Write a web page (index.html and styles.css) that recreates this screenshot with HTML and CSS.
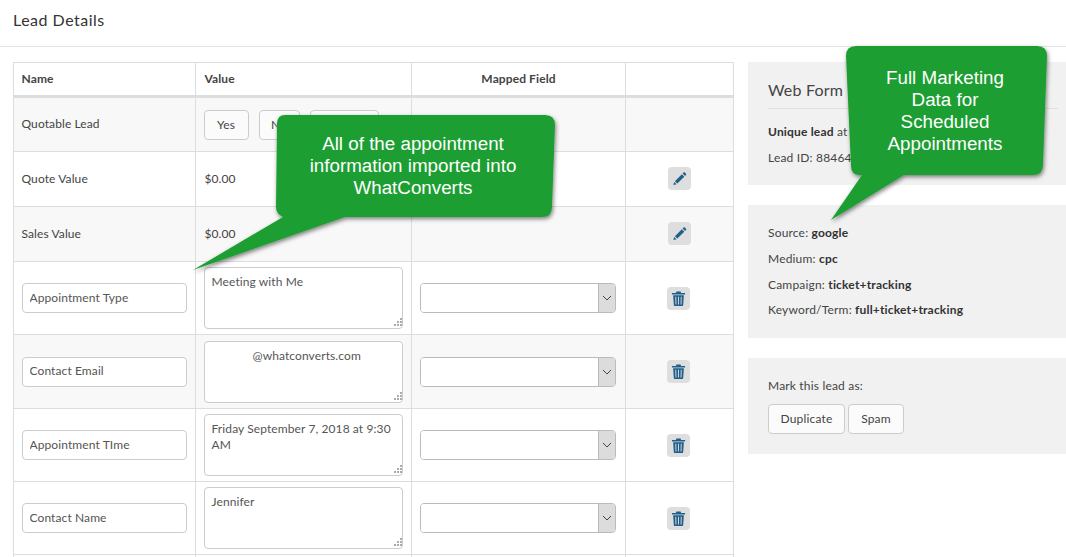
FILE: index.html
```html
<!DOCTYPE html>
<html lang="en">
<head>
<meta charset="utf-8">
<title>Lead Details</title>
<link rel="stylesheet" href="styles.css">
</head>
<body>
<svg class="defs" width="0" height="0" aria-hidden="true">
  <defs>
    <symbol id="pencil" viewBox="0 0 16 16"><path d="M1.5 15l.8-3.4 2.6 2.6zM3.1 10.8l7.4-7.4 2.6 2.6-7.4 7.4zM11.3 2.6l1-1c.4-.4 1-.4 1.4 0l1.2 1.2c.4.4.4 1 0 1.4l-1 1z" fill="#1f5f8b"/></symbol>
    <symbol id="trash" viewBox="0 0 16 16"><path d="M5.8 0.5h4.4l.6 1.5H15v1.6H1V2h4.200zM2.300 4.400h11.400L13 15a1 1 0 0 1-1 1H4a1 1 0 0 1-1-1zM4.600 6l.2 8.500h1L5.600 6zM7.500 6v8.500h1V6zM10.400 6l-.2 8.500h1l.2-8.500z" fill="#1f5f8b" fill-rule="evenodd"/></symbol>
    <symbol id="chev" viewBox="0 0 10 6"><path d="M1 1l4 4 4-4" fill="none" stroke="#444" stroke-width="1"/></symbol>
    <symbol id="grip" viewBox="0 0 9 9"><path d="M7 0h2v2H7zM4 3h2v2H4zM7 3h2v2H7zM1 6h2v2H1zM4 6h2v2H4zM7 6h2v2H7z" fill="#aaa"/></symbol>
  </defs>
</svg>
<header class="page-head"><h1>Lead Details</h1></header>
<main class="content">
  <table class="fields">
    <colgroup><col class="c-name"><col class="c-value"><col class="c-map"><col class="c-act"></colgroup>
    <thead>
      <tr><th>Name</th><th>Value</th><th class="center">Mapped Field</th><th></th></tr>
    </thead>
    <tbody>
      <tr class="short alt">
        <td>Quotable Lead</td>
        <td><div class="btn-row"><button class="btn b-yes">Yes</button><button class="btn b-no">No</button><button class="btn b-un">Unknown</button></div></td>
        <td></td><td></td>
      </tr>
      <tr class="short">
        <td>Quote Value</td><td class="val">$0.00</td><td></td>
        <td class="center"><span class="icon-btn"><svg><use href="#pencil"/></svg></span></td>
      </tr>
      <tr class="short alt">
        <td>Sales Value</td><td class="val">$0.00</td><td></td>
        <td class="center"><span class="icon-btn"><svg><use href="#pencil"/></svg></span></td>
      </tr>
      <tr>
        <td><input class="text-in" value="Appointment Type"></td>
        <td><div class="ta-wrap"><textarea class="ta">Meeting with Me</textarea><svg class="grip"><use href="#grip"/></svg></div></td>
        <td><div class="sel"><select></select><span class="sel-arrow"><svg><use href="#chev"/></svg></span></div></td>
        <td class="center"><span class="icon-btn"><svg><use href="#trash"/></svg></span></td>
      </tr>
      <tr class="tall alt">
        <td><input class="text-in" value="Contact Email"></td>
        <td><div class="ta-wrap"><textarea class="ta ta-masked">@whatconverts.com</textarea><svg class="grip"><use href="#grip"/></svg></div></td>
        <td><div class="sel"><select></select><span class="sel-arrow"><svg><use href="#chev"/></svg></span></div></td>
        <td class="center"><span class="icon-btn"><svg><use href="#trash"/></svg></span></td>
      </tr>
      <tr>
        <td><input class="text-in" value="Appointment TIme"></td>
        <td><div class="ta-wrap"><textarea class="ta">Friday September 7, 2018 at 9:30 AM</textarea><svg class="grip"><use href="#grip"/></svg></div></td>
        <td><div class="sel"><select></select><span class="sel-arrow"><svg><use href="#chev"/></svg></span></div></td>
        <td class="center"><span class="icon-btn"><svg><use href="#trash"/></svg></span></td>
      </tr>
      <tr>
        <td><input class="text-in" value="Contact Name"></td>
        <td><div class="ta-wrap"><textarea class="ta">Jennifer</textarea><svg class="grip"><use href="#grip"/></svg></div></td>
        <td><div class="sel"><select></select><span class="sel-arrow"><svg><use href="#chev"/></svg></span></div></td>
        <td class="center"><span class="icon-btn"><svg><use href="#trash"/></svg></span></td>
      </tr>
      <tr><td></td><td></td><td></td><td></td></tr>
    </tbody>
  </table>
  <aside class="side">
    <section class="panel p-form">
      <h2>Web Form Lead</h2>
      <p><b>Unique lead</b> at first contact</p>
      <p>Lead ID: 88464712</p>
    </section>
    <section class="panel p-source">
      <p>Source: <b>google</b></p>
      <p>Medium: <b>cpc</b></p>
      <p>Campaign: <b>ticket+tracking</b></p>
      <p>Keyword/Term: <b>full+ticket+tracking</b></p>
    </section>
    <section class="panel p-mark">
      <p>Mark this lead as:</p>
      <div class="mark-btns"><button class="btn b-dup">Duplicate</button><button class="btn b-spam">Spam</button></div>
    </section>
  </aside>
</main>
<svg class="callouts" width="1066" height="557" aria-hidden="true">
  <defs><filter id="sh" x="-10%" y="-10%" width="125%" height="125%"><feDropShadow dx="1" dy="2" stdDeviation="2" flood-color="#000" flood-opacity=".5"/></filter></defs>
  <path filter="url(#sh)" fill="#1f9e31" d="M285 115H545Q555 115 555 125L552 207Q552 217 542 217H345L193 270L283 217Q276 214 276 207L277 124Q277 115 285 115Z"/>
  <path filter="url(#sh)" fill="#1f9e31" d="M856 46H1037Q1047 46 1047 56L1043 165Q1043 175 1033 175H904L831 220L862 175H860Q851 175 851 166L846 56Q846 46 856 46Z"/>
</svg>
<div class="note note-a">All of the appointment information imported into WhatConverts</div>
<div class="note note-b">Full Marketing Data for Scheduled Appointments</div>
</body>
</html>
```
FILE: styles.css
```css
* { box-sizing: border-box; }
html, body { margin: 0; height: 557px; overflow: hidden; background: #fff; }
body { position: relative; font-family: "Lato", "Open Sans", sans-serif; font-size: 12px; color: #444; letter-spacing: .1px; }
.defs { position: absolute; }
.page-head { height: 47px; border-bottom: 1px solid #e4e4e4; padding: 11px 13px 0; }
.page-head h1 { margin: 0; font-size: 16px; font-weight: 400; line-height: 18px; color: #333; letter-spacing: .5px; }
.content { display: flex; gap: 14px; padding: 15px 0 0 13px; width: 1400px; }

.fields { width: 720px; table-layout: fixed; border-collapse: collapse; flex: none; align-self: flex-start; }
.c-name { width: 182px; } .c-value { width: 216px; } .c-map { width: 214px; } .c-act { width: 108px; }
.fields th, .fields td { border: 1px solid #ddd; padding: 5px 7.5px; text-align: left; vertical-align: middle; }
.fields th { height: 34px; font-weight: 700; color: #444; border-bottom: 3px solid #ddd; padding: 4px 7.5px 6px; }
.fields th:nth-child(2) { padding-left: 8.5px; }
.fields .center { text-align: center; }
.fields tbody tr.alt { background: #f8f8f8; }
.fields tbody td { height: 73px; }
.fields tbody tr.tall td { height: 74px; }
.fields tbody tr.short td { height: 55px; padding: 4px 7.5px 6px; }
.fields tbody tr.short td.val { padding-left: 8.5px; }
.fields tbody td.center { padding-right: 9.5px; padding-top: 5px; padding-bottom: 5px; }

.btn { font: inherit; letter-spacing: inherit; color: #444; height: 30px; padding: 0 0 1px; background: #fbfbfb; border: 1px solid #ccc; border-radius: 4px; }
.btn-row { display: flex; gap: 10px; margin: 1px 0 -1px; }
.b-yes { width: 45px; } .b-no { width: 41px; } .b-un { width: 69px; }

.text-in { font: inherit; letter-spacing: inherit; color: #555; width: 165px; height: 30px; padding: 0 7px 2px; background: #fff; border: 1px solid #ccc; border-radius: 4px; display: block; }
.ta-wrap { position: relative; height: 62px; }
.ta { display: block; font: inherit; letter-spacing: inherit; color: #555; width: 199px; height: 62px; padding: 6px 3px 6px 7px; line-height: 16px; background: #fff; border: 1px solid #ccc; border-radius: 4px; resize: none; overflow: hidden; margin: 0; }
.ta-masked { text-indent: 41px; }
.grip { position: absolute; right: 2px; bottom: 2px; width: 9px; height: 9px; }

.sel { display: flex; width: 196px; height: 30px; border: 1px solid #bbb; border-radius: 4px; background: #fff; overflow: hidden; }
.sel select { flex: 1; min-width: 0; border: 0; background: #fff; appearance: none; }
.sel-arrow { width: 17px; background: #dcdcdc; border-left: 1px solid #bbb; display: flex; align-items: center; justify-content: center; }
.sel-arrow svg { width: 10px; height: 6px; }

.icon-btn { display: inline-flex; align-items: center; justify-content: center; width: 23px; height: 23px; background: #dedede; border-radius: 4px; vertical-align: middle; }
.icon-btn svg { width: 15px; height: 15px; }

.side { width: 330px; flex: none; display: flex; flex-direction: column; gap: 20px; }
.panel { background: #f1f1f1; padding: 0 20px; letter-spacing: .18px; }
.panel p { margin: 0; line-height: 16px; }
.panel h2 { margin: 0; font-size: 16px; font-weight: 400; color: #444; line-height: 20px; padding: 18px 0 8px; border-bottom: 1px solid #e0e0e0; }
.panel b { color: #333; }
.p-form { height: 123px; }
.p-form h2 { margin-bottom: 15px; }
.p-form p + p { margin-top: 10px; }
.p-source { height: 133px; padding-top: 20px; }
.p-source p + p { margin-top: 10px; }
.p-source p:last-child { margin-top: 9px; }
.p-mark { height: 96px; padding-top: 20px; }
.mark-btns { display: flex; gap: 3px; margin-top: 10px; }
.b-dup { width: 77px; } .b-spam { width: 56px; }

.callouts { position: absolute; left: 0; top: 0; pointer-events: none; }
.note { position: absolute; color: #fff; font-family: "Liberation Sans", Arial, sans-serif; font-size: 18.8px; line-height: 22px; text-align: center; letter-spacing: 0; }
.note-a { left: 295px; top: 133px; width: 236px; }
.note-b { left: 870px; top: 67px; width: 150px; }
```
